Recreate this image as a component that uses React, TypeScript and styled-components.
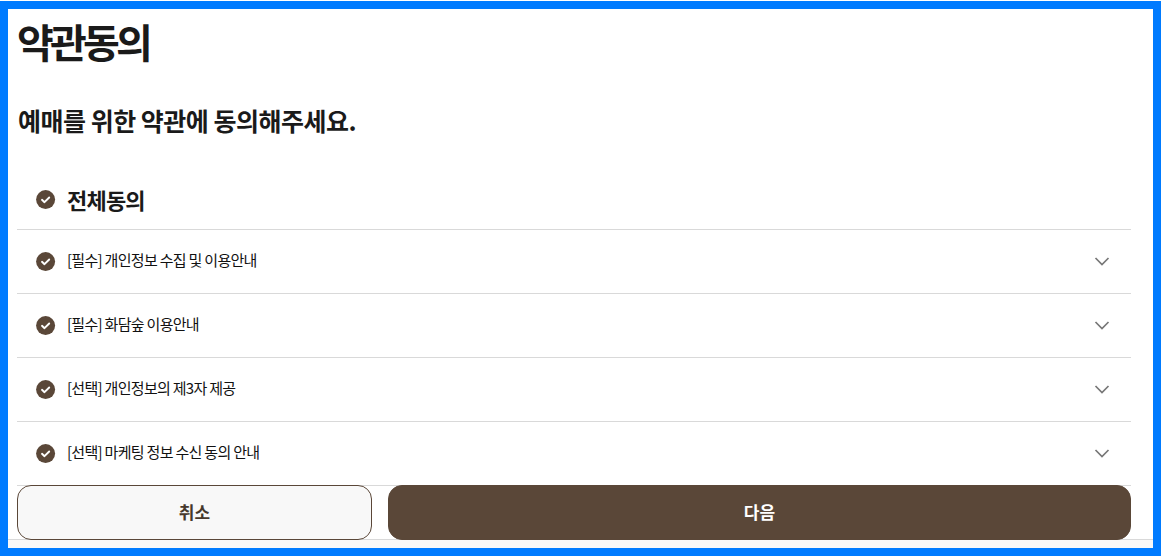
import * as React from 'react';
import styled, { createGlobalStyle } from 'styled-components';

const GlobalStyle = createGlobalStyle`
  html, body {
    margin: 0;
    padding: 0;
    background: #fff;
  }
  body {
    font-family: "Noto Sans CJK KR", "Noto Sans", sans-serif;
    color: #1a1a1a;
  }
`;

const Page = styled.div`
  box-sizing: border-box;
  width: 1161px;
  height: 555px;
  margin-top: 1px;
  border: 8px solid #007bff;
  background: #fff;
  display: flex;
  flex-direction: column;
  overflow: hidden;
`;

const Content = styled.main`
  padding: 0 22px 0 9px;
  flex: 1;
  display: flex;
  flex-direction: column;
`;

const Title = styled.h1`
  margin: 6px 0 0;
  font-size: 40px;
  line-height: 52px;
  font-weight: 700;
  letter-spacing: -3.8px;
`;

const SubTitle = styled.h2`
  margin: 35px 0 0 1px;
  font-size: 25px;
  line-height: 36px;
  font-weight: 700;
  letter-spacing: -0.5px;
`;

const TermsList = styled.ul`
  list-style: none;
  margin: 36px 0 0;
  padding: 0;
`;

const TermRow = styled.li<{ $all?: boolean }>`
  display: flex;
  align-items: center;
  height: ${(p) => (p.$all ? '51px' : '63px')};
  padding: ${(p) => (p.$all ? '0 20px 4px 19px' : '0 20px 0 19px')};
  border-bottom: 1px solid #d9d9d9;
`;

const CheckIcon = styled.svg`
  width: 20px;
  height: 20px;
  flex: none;
  margin-right: 11px;
`;

const TermLabel = styled.span<{ $all?: boolean }>`
  flex: 1;
  font-size: ${(p) => (p.$all ? '22px' : '15px')};
  font-weight: ${(p) => (p.$all ? 700 : 400)};
  letter-spacing: ${(p) => (p.$all ? '-0.8px' : '-0.7px')};
  line-height: 1.4;
  color: ${(p) => (p.$all ? '#1a1a1a' : '#111')};
  padding-bottom: ${(p) => (p.$all ? '0' : '5px')};
`;

const Chevron = styled.svg`
  width: 18px;
  height: 18px;
  flex: none;
  margin-bottom: 2px;
`;

const Actions = styled.div`
  display: flex;
  gap: 16px;
  margin-top: -1px;
  position: relative;
  z-index: 1;
`;

const Button = styled.button<{ $primary?: boolean }>`
  height: 55px;
  box-sizing: border-box;
  flex: ${(p) => (p.$primary ? '0 0 743px' : '0 0 355px')};
  padding: 0 0 2px;
  border-radius: 14px;
  border: 1px solid #5a4738;
  background: ${(p) => (p.$primary ? '#5a4738' : '#f8f8f8')};
  color: ${(p) => (p.$primary ? '#fff' : '#46382c')};
  font-family: inherit;
  font-size: 17px;
  font-weight: 700;
`;

const BottomStrip = styled.div`
  flex: none;
  height: 9px;
  margin-top: -1px;
  box-sizing: border-box;
  border-top: 1px solid #d9d9d9;
  background: #f8f8f8;
`;

const terms = [
  '[필수] 개인정보 수집 및 이용안내',
  '[필수] 화담숲 이용안내',
  '[선택] 개인정보의 제3자 제공',
  '[선택] 마케팅 정보 수신 동의 안내',
];

function Check() {
  return (
    <CheckIcon viewBox="0 0 20 20">
      <circle cx="9.6" cy="9.6" r="9.5" fill="#5a4738" />
      <path d="M6 9.8l2.5 2.4 4.7-4.7" fill="none" stroke="#fff" strokeWidth="1.9" strokeLinecap="round" strokeLinejoin="round" />
    </CheckIcon>
  );
}

export default function App() {
  return (
    <Page>
      <GlobalStyle />
      <Content>
        <Title>약관동의</Title>
        <SubTitle>예매를 위한 약관에 동의해주세요.</SubTitle>
        <TermsList>
          <TermRow $all>
            <Check />
            <TermLabel $all>전체동의</TermLabel>
          </TermRow>
          {terms.map((term) => (
            <TermRow key={term}>
              <Check />
              <TermLabel>{term}</TermLabel>
              <Chevron viewBox="0 0 18 18">
                <path d="M2.5 6l6.5 6.5L15.5 6" fill="none" stroke="#777" strokeWidth="1.7" />
              </Chevron>
            </TermRow>
          ))}
        </TermsList>
        <Actions>
          <Button>취소</Button>
          <Button $primary>다음</Button>
        </Actions>
      </Content>
      <BottomStrip />
    </Page>
  );
}
